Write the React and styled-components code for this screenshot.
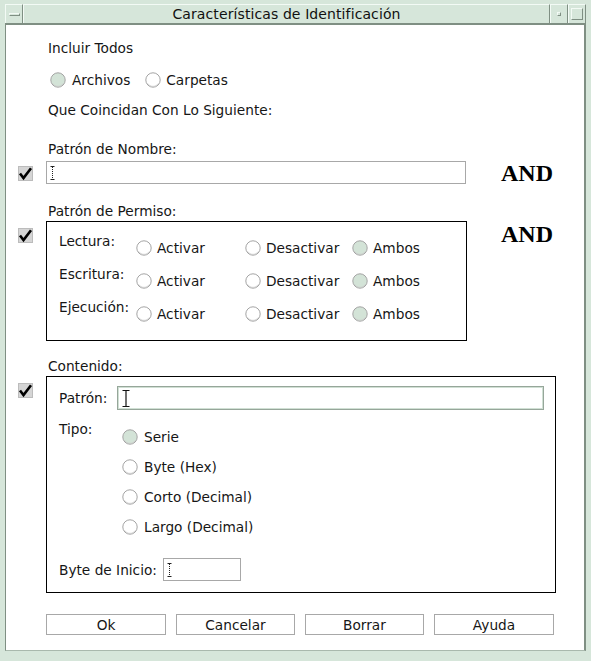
import React from "react";
import styled, { createGlobalStyle } from "styled-components";

const FRAME = "#d6e6da";
const EDGE = "#7f8f83";
const LIGHT = "#f3faf5";

const GlobalStyle = createGlobalStyle`
  html, body { margin: 0; padding: 0; background: #fff; }
  body { font-family: "DejaVu Sans", sans-serif; }
`;

const Window = styled.div`
  width: 591px;
  height: 661px;
  box-sizing: border-box;
  background: ${FRAME};
  padding: 4px 5px 10px 5px;
  display: flex;
  flex-direction: column;
`;

const TitleBar = styled.div`
  display: flex;
  height: 19px;
  border-bottom: 2px solid ${EDGE};
`;

const TitleCell = styled.div`
  box-sizing: border-box;
  width: ${(p) => (p.$w ? `${p.$w}px` : "auto")};
  flex: ${(p) => (p.$w ? "none" : "1")};
  border-top: 1px solid ${LIGHT};
  border-left: 1px solid ${LIGHT};
  border-right: 1px solid ${EDGE};
  display: flex;
  align-items: center;
  justify-content: center;
  font-size: 14px;
  color: #111;
  letter-spacing: 0.1px;
`;

const MenuBar = styled.span`
  width: 11px;
  height: 3px;
  box-sizing: border-box;
  border-top: 1px solid ${LIGHT};
  border-left: 1px solid ${LIGHT};
  border-bottom: 1px solid ${EDGE};
  border-right: 1px solid ${EDGE};
`;

const MiniSquare = styled.span`
  width: ${(p) => p.$size}px;
  height: ${(p) => p.$size}px;
  box-sizing: border-box;
  border-top: 1px solid ${LIGHT};
  border-left: 1px solid ${LIGHT};
  border-bottom: 1px solid ${EDGE};
  border-right: 1px solid ${EDGE};
`;

const Body = styled.div`
  flex: 1;
  background: #fff;
  border-left: 1px solid ${EDGE};
  border-right: 2px solid ${EDGE};
  border-bottom: 1px solid #a9b9ad;
  display: flex;
  flex-direction: column;
  padding-top: 15px;
  font-size: 13.7px;
  color: #161616;
`;

const Caption = styled.div`
  margin-left: 42px;
  margin-top: ${(p) => p.$top || 0}px;
  line-height: 16px;
`;

const RadioGroup = styled.div`
  display: flex;
  gap: 15px;
  margin: 15px 0 0 44px;
  height: 18px;
  align-items: center;
`;

const Option = styled.div`
  display: flex;
  align-items: center;
  gap: ${(p) => p.$gap || 5}px;
  width: ${(p) => (p.$w ? `${p.$w}px` : "auto")};
  line-height: 16px;
`;

const Section = styled.div`
  display: grid;
  grid-template-columns: 40px 421px 89px;
  align-items: ${(p) => p.$align || "center"};
  margin-top: ${(p) => p.$top || 0}px;
`;

const CheckCell = styled.div`
  margin-left: 12px;
  margin-top: ${(p) => p.$top || 0}px;
  display: flex;
`;

const TextField = styled.div`
  box-sizing: border-box;
  width: ${(p) => p.$w}px;
  height: ${(p) => p.$h || 23}px;
  border: 1px solid #a8a8a8;
  background: #fff;
  display: flex;
  align-items: center;
  padding-left: 3px;
`;

const PatternField = styled.div`
  box-sizing: border-box;
  flex: 1;
  height: 24px;
  border: 1px solid #96a69a;
  box-shadow: inset 0 0 0 1px #d0e0d4;
  display: flex;
  align-items: center;
  padding-left: 4px;
`;

const AndLabel = styled.div`
  font-family: "Liberation Serif", serif;
  font-weight: bold;
  font-size: 24px;
  line-height: 22px;
  color: #000;
  justify-self: end;
  margin-right: 3px;
  margin-top: ${(p) => p.$top || 0}px;
`;

const PermBox = styled.div`
  box-sizing: border-box;
  height: 120px;
  border: 1px solid #000;
  padding: 11px 0 0 12px;
`;

const PermRow = styled.div`
  display: flex;
  height: 33px;
`;

const RowLabel = styled.div`
  width: ${(p) => p.$w}px;
  flex: none;
  line-height: 16px;
`;

const PermOptions = styled.div`
  display: flex;
  margin-top: 6px;
  height: 18px;
  align-items: center;
`;

const ContentBox = styled.div`
  grid-column: 2 / 4;
  box-sizing: border-box;
  border: 1px solid #000;
  padding: 9px 11px 11px 12px;
  display: flex;
  flex-direction: column;
`;

const BoxRow = styled.div`
  display: flex;
  align-items: ${(p) => p.$align || "center"};
  margin-top: ${(p) => p.$top || 0}px;
`;

const RadioList = styled.div`
  display: flex;
  flex-direction: column;
  margin-top: 1px;
`;

const ListItem = styled.div`
  height: 30px;
  display: flex;
  align-items: center;
  gap: 6px;
`;

const ButtonRow = styled.div`
  display: grid;
  grid-template-columns: 120px 119px 119px 120px;
  gap: 10px;
  margin: 21px 0 0 40px;
`;

const Button = styled.div`
  box-sizing: border-box;
  height: 21px;
  border: 1px solid #a8a8a8;
  background: #fff;
  display: flex;
  align-items: center;
  justify-content: center;
  font-size: 13.7px;
`;

const Radio = ({ on }) => (
  <svg width="16" height="16" viewBox="0 0 16 16" style={{ flex: "none" }}>
    <circle cx="8" cy="8" r="7.2" fill={on ? "#d3e3d7" : "#fff"} stroke="#a4a4a4" strokeWidth="1" />
    <path d="M2.6 11.4 A6.4 6.4 0 0 0 13.4 11.4" fill="none" stroke="#c9c9c9" strokeWidth="0.8" />
  </svg>
);

const Check = () => (
  <svg width="15" height="15" viewBox="0 0 15 15">
    <rect x="0.5" y="0.5" width="14" height="14" fill="#d5d5d5" stroke="#bcbcbc" />
    <path d="M2 7.5 L5.5 12 L13 2.2" fill="none" stroke="#000" strokeWidth="2.6" strokeLinejoin="miter" />
  </svg>
);

const SmallBeam = () => (
  <svg width="5" height="14" viewBox="0 0 5 14">
    <path d="M0.5 0.5 H4.5 M0.5 13.5 H4.5" stroke="#222" strokeWidth="1" />
    <path d="M2.5 1 V13" stroke="#222" strokeWidth="1" strokeDasharray="1 1" />
  </svg>
);

const BigBeam = () => (
  <svg width="8" height="17" viewBox="0 0 8 17">
    <path d="M0.5 0.5 H7.5 M0.5 16.5 H7.5 M4 0.5 V16.5" stroke="#111" strokeWidth="1.2" fill="none" />
  </svg>
);

const perms = ["Lectura:", "Escritura:", "Ejecución:"];
const tipos = ["Serie", "Byte (Hex)", "Corto (Decimal)", "Largo (Decimal)"];

export default function App() {
  return (
    <>
      <GlobalStyle />
      <Window>
        <TitleBar>
          <TitleCell $w={18}>
            <MenuBar />
          </TitleCell>
          <TitleCell>Características de Identificación</TitleCell>
          <TitleCell $w={18}>
            <MiniSquare $size={4} />
          </TitleCell>
          <TitleCell $w={18}>
            <MiniSquare $size={12} />
          </TitleCell>
        </TitleBar>

        <Body>
          <Caption>Incluir Todos</Caption>
          <RadioGroup>
            <Option $gap={6}>
              <Radio on />
              Archivos
            </Option>
            <Option $gap={5}>
              <Radio />
              Carpetas
            </Option>
          </RadioGroup>
          <Caption $top={13}>Que Coincidan Con Lo Siguiente:</Caption>

          <Caption $top={23}>Patrón de Nombre:</Caption>
          <Section $top={4}>
            <CheckCell $top={1}>
              <Check />
            </CheckCell>
            <TextField $w={420}>
              <SmallBeam />
            </TextField>
            <AndLabel>AND</AndLabel>
          </Section>

          <Caption $top={19}>Patrón de Permiso:</Caption>
          <Section $top={2} $align="start">
            <CheckCell $top={7}>
              <Check />
            </CheckCell>
            <PermBox>
              {perms.map((p) => (
                <PermRow key={p}>
                  <RowLabel $w={77}>{p}</RowLabel>
                  <PermOptions>
                    <Option $w={109}>
                      <Radio />
                      Activar
                    </Option>
                    <Option $w={107}>
                      <Radio />
                      Desactivar
                    </Option>
                    <Option>
                      <Radio on />
                      Ambos
                    </Option>
                  </PermOptions>
                </PermRow>
              ))}
            </PermBox>
            <AndLabel $top={2}>AND</AndLabel>
          </Section>

          <Caption $top={17}>Contenido:</Caption>
          <Section $top={2} $align="start">
            <CheckCell $top={7}>
              <Check />
            </CheckCell>
            <ContentBox>
              <BoxRow>
                <RowLabel $w={58}>Patrón:</RowLabel>
                <PatternField>
                  <BigBeam />
                </PatternField>
              </BoxRow>
              <BoxRow $top={11} $align="start">
                <RowLabel $w={63}>Tipo:</RowLabel>
                <RadioList>
                  {tipos.map((t, i) => (
                    <ListItem key={t}>
                      <Radio on={i === 0} />
                      {t}
                    </ListItem>
                  ))}
                </RadioList>
              </BoxRow>
              <BoxRow $top={16}>
                <RowLabel $w={104}>Byte de Inicio:</RowLabel>
                <TextField $w={78}>
                  <SmallBeam />
                </TextField>
              </BoxRow>
            </ContentBox>
          </Section>

          <ButtonRow>
            <Button>Ok</Button>
            <Button>Cancelar</Button>
            <Button>Borrar</Button>
            <Button>Ayuda</Button>
          </ButtonRow>
        </Body>
      </Window>
    </>
  );
}
